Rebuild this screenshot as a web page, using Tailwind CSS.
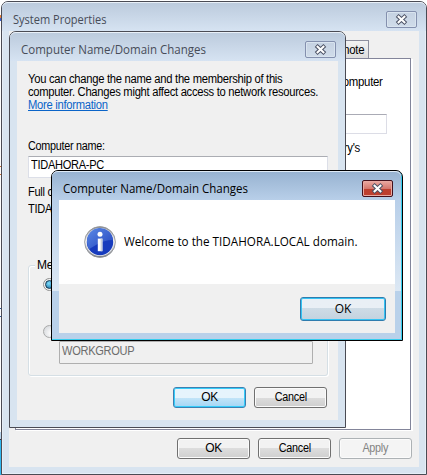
<!DOCTYPE html>
<html lang="en">
<head>
<meta charset="utf-8">
<title>System Properties</title>
<script src="https://cdn.jsdelivr.net/npm/@tailwindcss/browser@4"></script>
</head>
<body class="relative h-[475px] w-[427px] overflow-hidden bg-white font-['Liberation_Sans',sans-serif] text-[12px] leading-[13px] text-black whitespace-nowrap">
<!-- Sliver of the desktop at the left edge -->
<div class="flex h-full w-[3px] flex-col">
  <div class="mt-[15px] h-[3px] bg-[#e8803c]"></div><div class="h-[3px] bg-[#3b5fd0]"></div>
  <div class="mt-[145px] h-[9px] border-y border-[#d07030]"></div>
  <div class="mt-[133px] h-[9px] border-y border-[#2c5a9c]"></div>
  <div class="mt-[115px] h-[7px] bg-[#b8d4ec]"></div><div class="h-px bg-[#334]"></div>
  <div class="flex-1 bg-[#30b8f0]"></div>
</div>

<!-- System Properties window -->
<section class="absolute left-px top-px flex h-[474px] w-[426px] flex-col rounded-t-[7px] border border-[#4a4b54] bg-[#d8e4f0] px-[7px] pb-[7px] shadow-[inset_0_0_0_1px_#e6eef7]">
  <header class="-mx-[7px] flex h-[29px] shrink-0 items-start justify-between rounded-t-[6px] border-t border-[#e9f0f8] bg-linear-to-b from-[#bccbdd] to-[#d6e3f2] pl-[11px] pr-[9px]">
    <h1 class="mt-[9px] origin-left scale-x-92 font-['Open_Sans',sans-serif] text-[12px] leading-[16px] text-[#474c58]">System Properties</h1>
    <button class="mt-[8px] grid h-[17px] w-[31px] place-items-center rounded-[2px] border border-[#8490ae] bg-linear-to-b from-[#c5d2e2] to-[#d0dcea] shadow-[inset_0_0_0_1px_#d9e4ef]">
      <svg width="13" height="11" viewBox="0 0 13 11"><path d="M3.6 2.8 9.4 8.2M9.4 2.8 3.6 8.2" stroke="#4b5164" stroke-width="4" stroke-linecap="square"/><path d="M3.6 2.8 9.4 8.2M9.4 2.8 3.6 8.2" stroke="#fff" stroke-width="2.1" stroke-linecap="square"/></svg>
    </button>
  </header>
  <div class="flex flex-1 flex-col bg-[#f0f0f0] pl-[6px] pr-[7px]">
    <div class="mt-[9px] flex h-[18px] justify-end pr-[43px]">
      <div class="w-[50px] border border-b-0 border-[#8d8f9e] bg-linear-to-b from-[#f3f3f3] to-[#dedede] pr-[4px] pt-[3px] text-right tracking-[-0.3px]"><span class="inline-block origin-right scale-x-95">Remote</span></div>
    </div>
    <div class="mr-px h-[372px] border border-[#83859a] bg-white pl-[319px] shadow-[1px_1px_0_#fff,2px_1px_0_#fff]">
      <p class="mt-[17px] w-[47px] origin-right scale-x-95 text-right tracking-[-0.3px]">computer</p>
      <div class="-ml-2 mt-[25px] h-[20px] w-[60px] border border-[#dcdde6] border-t-[#aaabb5]"></div>
      <p class="mt-[8px] w-[25px] origin-right scale-x-95 text-right tracking-[-0.3px]">ory's</p>
    </div>
    <div class="mt-[8px] flex justify-end gap-[8px] text-center leading-[19px] tracking-[-0.3px]">
      <button class="h-[21px] w-[73px] rounded-[3px] border border-[#707070] bg-linear-to-b from-[#f2f2f2] from-50% via-[#dddddd] via-50% to-[#cfcfcf] shadow-[inset_0_0_0_1px_#fbfbfb]">OK</button>
      <button class="h-[21px] w-[73px] rounded-[3px] border border-[#707070] bg-linear-to-b from-[#f2f2f2] from-50% via-[#dddddd] via-50% to-[#cfcfcf] shadow-[inset_0_0_0_1px_#fbfbfb]"><span class="inline-block scale-x-90">Cancel</span></button>
      <button class="h-[21px] w-[73px] rounded-[3px] border border-[#adb2b5] bg-[#f4f4f4] text-[#838383] shadow-[inset_0_0_0_1px_#fbfbfb]"><span class="inline-block scale-x-90">Apply</span></button>
    </div>
  </div>
</section>

<!-- Computer Name/Domain Changes window -->
<section class="absolute left-[9px] top-[31px] flex h-[397px] w-[337px] flex-col rounded-t-[7px] border border-[#4a4b54] bg-[#d8e4f0] px-[7px] pb-[7px]">
  <header class="-mx-[7px] flex h-[29px] shrink-0 items-start justify-between rounded-t-[6px] border-t border-[#e9f0f8] bg-linear-to-b from-[#bccbdd] to-[#d6e3f2] pl-[11px] pr-[9px]">
    <h1 class="mt-[9px] origin-left scale-x-96 font-['Open_Sans',sans-serif] text-[12px] leading-[16px] text-[#474c58]">Computer Name/Domain Changes</h1>
    <button class="mt-[8px] grid h-[17px] w-[31px] place-items-center rounded-[2px] border border-[#8490ae] bg-linear-to-b from-[#c5d2e2] to-[#d0dcea] shadow-[inset_0_0_0_1px_#d9e4ef]">
      <svg width="13" height="11" viewBox="0 0 13 11"><path d="M3.6 2.8 9.4 8.2M9.4 2.8 3.6 8.2" stroke="#4b5164" stroke-width="4" stroke-linecap="square"/><path d="M3.6 2.8 9.4 8.2M9.4 2.8 3.6 8.2" stroke="#fff" stroke-width="2.1" stroke-linecap="square"/></svg>
    </button>
  </header>
  <div class="flex flex-1 flex-col bg-[#f0f0f0] pl-[11px] pr-[10px]">
    <p class="mt-[12px] origin-left scale-x-[0.935] tracking-[-0.3px]">You can change the name and the membership of this<br>computer. Changes might affect access to network resources.<br><a class="text-[#0a64c8] underline">More information</a></p>
    <p class="mt-[28px] origin-left scale-x-90 tracking-[-0.3px]">Computer name:</p>
    <div class="mt-[3px] h-[22px] border border-[#dcdfe8] border-t-[#abadb3] bg-white pl-[2px] pt-[2px] tracking-[-0.3px]"><span class="inline-block origin-left scale-x-92">TIDAHORA-PC</span></div>
    <p class="mt-[8px] origin-left scale-x-92 tracking-[-0.3px]">Full c</p>
    <p class="mt-[4px] origin-left scale-x-92 tracking-[-0.3px]">TIDA</p>
    <fieldset class="mt-[42px] h-[118px] shrink-0">
      <div class="mt-[7px] h-[111px] rounded-[3px] border border-[#d5dfe5] shadow-[1px_1px_0_#fff,inset_1px_1px_0_#fff]">
        <div class="-mt-[7px] ml-[6px] w-[70px] bg-[#f0f0f0] pl-[2px] tracking-[-0.3px]">Me</div>
        <div class="ml-[14px] mt-[6px] flex h-[13px] w-[13px] items-center justify-center rounded-full border border-[#8e8f8f] bg-[#f4f4f4]"><span class="h-[9px] w-[9px] rounded-full border border-[#12344f] bg-radial-[at_40%_35%] from-[#7fe0ff] to-[#0b5f94]"></span></div>
        <div class="ml-[14px] mt-[34px] h-[13px] w-[13px] rounded-full border border-[#a8a9a9] bg-radial-[at_65%_65%] from-white to-[#cfd2d6]"></div>
        <div class="ml-[30px] mt-[3px] h-[23px] w-[254px] rounded-[1px] border border-[#afafaf] pl-[2px] pt-[3px] text-[#6d6d6d] tracking-[-0.3px]"><span class="inline-block origin-left scale-x-92">WORKGROUP</span></div>
      </div>
    </fieldset>
    <div class="mr-px mt-[11px] flex justify-end gap-[8px] text-center leading-[19px] tracking-[-0.3px]">
      <button class="h-[21px] w-[73px] rounded-[3px] border border-[#3c7fb1] bg-linear-to-b from-[#e6f4fc] from-50% via-[#c4e5f8] via-50% to-[#a3d6f5] shadow-[inset_0_0_0_1px_#35cdfa]">OK</button>
      <button class="h-[21px] w-[73px] rounded-[3px] border border-[#707070] bg-linear-to-b from-[#f2f2f2] from-50% via-[#dddddd] via-50% to-[#cfcfcf] shadow-[inset_0_0_0_1px_#fbfbfb]"><span class="inline-block scale-x-90">Cancel</span></button>
    </div>
  </div>
</section>

<!-- Active message box -->
<section class="absolute left-[51px] top-[170px] flex h-[171px] w-[352px] flex-col rounded-t-[7px] border border-black bg-linear-to-b from-[#b8cfe9] from-[29px] via-[#dce8f4] via-[120px] to-[#b9d1ea] to-[120px] font-['Open_Sans',sans-serif] shadow-[inset_-1px_-1px_0_#35cdee]">
  <header class="mr-px flex h-[29px] shrink-0 items-start justify-between rounded-t-[6px] border-t border-[#e0ebf6] bg-linear-to-b from-[#98b3d1] to-[#b8cfe9] pl-[11px] pr-[8px]">
    <h1 class="mt-[9px] origin-left scale-x-96 text-[12px] leading-[16px] text-black">Computer Name/Domain Changes</h1>
    <button class="mt-[8px] grid h-[17px] w-[31px] place-items-center rounded-[2px] border border-[#43101c] bg-linear-to-b from-[#eaa9a3] from-0% via-[#d4786f] via-50% to-[#d4796a] shadow-[inset_0_0_0_1px_#e8a9a2,inset_0_-7px_0_#bd3f2f]">
      <svg width="13" height="11" viewBox="0 0 13 11"><path d="M3.6 2.8 9.4 8.2M9.4 2.8 3.6 8.2" stroke="#4b5164" stroke-width="4" stroke-linecap="square"/><path d="M3.6 2.8 9.4 8.2M9.4 2.8 3.6 8.2" stroke="#fff" stroke-width="2.1" stroke-linecap="square"/></svg>
    </button>
  </header>
  <div class="mx-[7px] flex h-[84px] items-center bg-white pl-[25px]">
    <svg width="32" height="32" viewBox="0 0 32 32">
      <defs>
        <linearGradient id="rim" x2="0" y2="1"><stop stop-color="#8e9196"/><stop offset=".5" stop-color="#f2f2f2"/><stop offset="1" stop-color="#777b82"/></linearGradient>
        <linearGradient id="disc" x1="0" x2="1" y2="1"><stop stop-color="#5b8ae6"/><stop offset="1" stop-color="#2344bd"/></linearGradient>
      </defs>
      <circle cx="16" cy="16" r="15.4" fill="url(#rim)" stroke="#8b8e94" stroke-width=".8"/>
      <circle cx="16" cy="16" r="14" fill="#eceef2"/>
      <circle cx="16" cy="16" r="13.2" fill="#173bbd"/>
      <path d="M3 16A13 13 0 0 1 29 14Q20 14 12 19T5 23Q3 20 3 16Z" fill="url(#disc)"/>
      <circle cx="16" cy="8.2" r="2.5" fill="#fff"/>
      <path d="M13.8 12.6h4.6v12.6h-4.6z" fill="#fff"/><path d="M16.6 12.6h1.8v12.6h-1.8z" fill="#c9cfdc"/>
    </svg>
    <p class="ml-[8px] origin-left scale-x-[0.975] text-[12px] leading-[16px]">Welcome to the TIDAHORA.LOCAL domain.</p>
  </div>
  <div class="mx-[7px] flex h-[49px] justify-end bg-[#f0f0f0] pr-[9px] pt-[13px]">
    <button class="h-[24px] w-[86px] rounded-[3px] border border-[#2f7cae] bg-linear-to-b from-[#e9eff5] from-45% via-[#cfdce6] via-45% to-[#c3d2df] text-[12px] leading-[20px] shadow-[inset_0_0_0_1px_#35c3f3]">OK</button>
  </div>
</section>
</body>
</html>
